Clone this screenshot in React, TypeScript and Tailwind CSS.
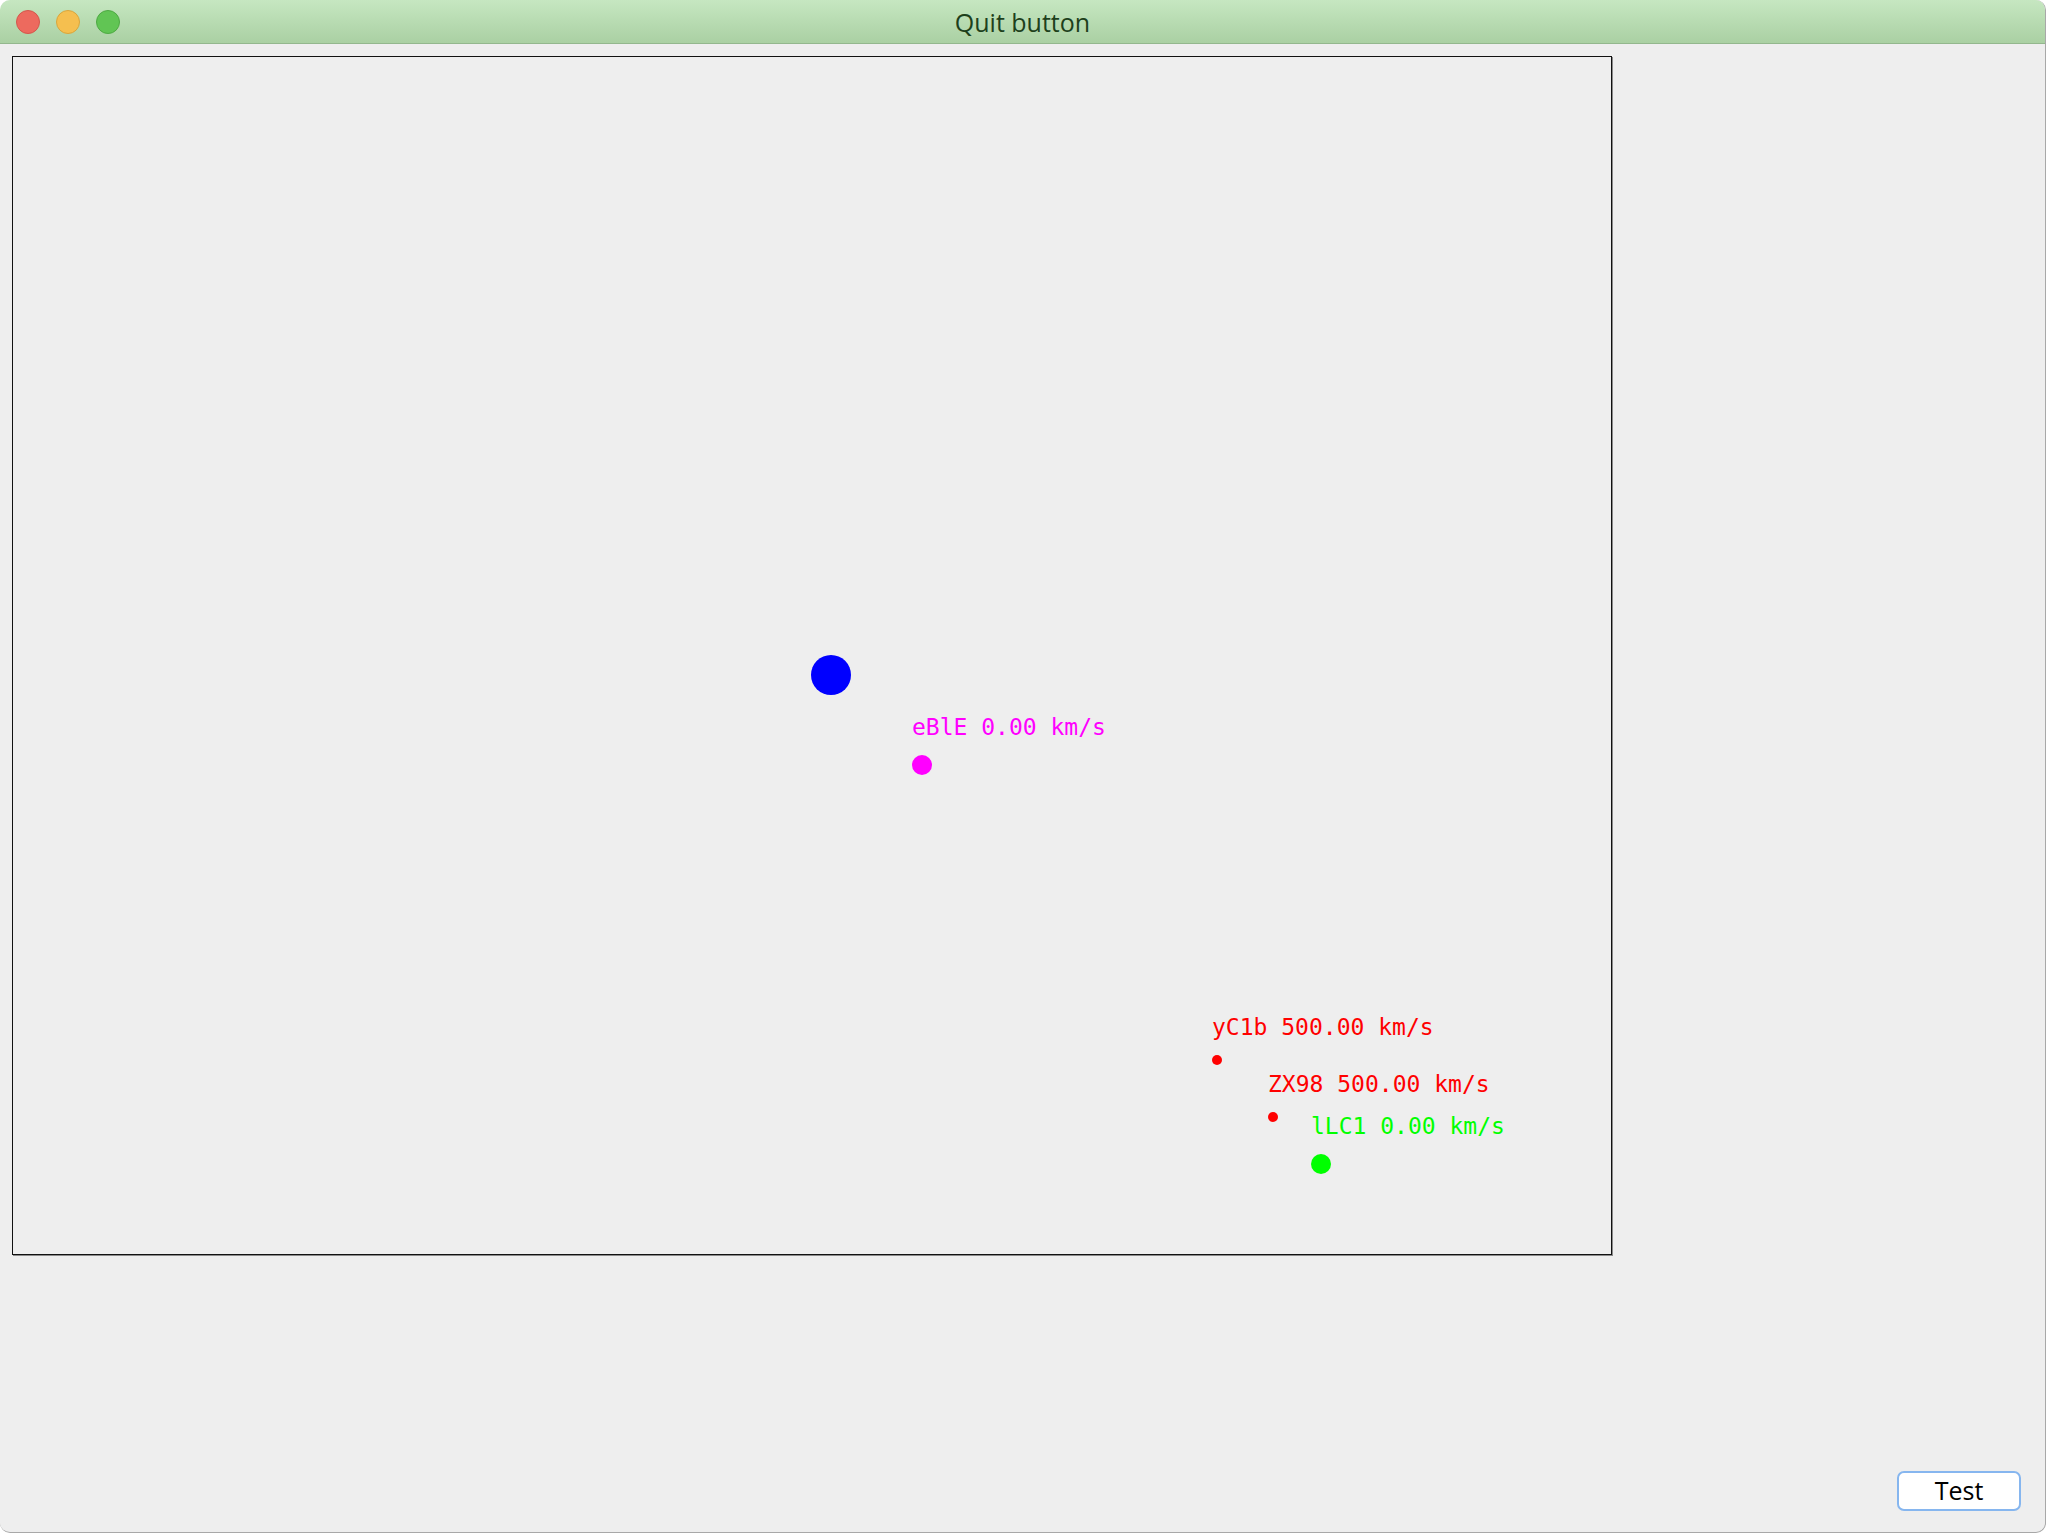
type Body = {
  name: string;
  speed: string;
  color: string;
  x: number;
  y: number;
  size: number;
};

// positions are relative to the canvas' inner top-left corner
const bodies: Body[] = [
  { name: "eBlE", speed: "0.00", color: "#ff00ff", x: 899, y: 698, size: 20 },
  { name: "yC1b", speed: "500.00", color: "#ff0000", x: 1199, y: 998, size: 10 },
  { name: "ZX98", speed: "500.00", color: "#ff0000", x: 1255, y: 1055, size: 10 },
  { name: "lLC1", speed: "0.00", color: "#00ff00", x: 1298, y: 1097, size: 20 },
];

const TrafficLights = () => (
  <div className="flex items-center gap-[16px] pl-[16px]">
    <span className="block w-[24px] h-[24px] rounded-full bg-[#ed6a5e] border border-[#d4574c]" />
    <span className="block w-[24px] h-[24px] rounded-full bg-[#f5bf4f] border border-[#d9a53c]" />
    <span className="block w-[24px] h-[24px] rounded-full bg-[#61c554] border border-[#4ea943]" />
  </div>
);

export default function App() {
  return (
    <div className="w-[2048px] h-[1536px] bg-[#ffffff] overflow-hidden relative">
      <div className="w-[2046px] h-[1533px] flex flex-col bg-[#eeeeee] rounded-[10px] border-r border-b border-[#a8a8a8] overflow-hidden">
        {/* title bar */}
        <div className="relative h-[44px] shrink-0 flex items-center bg-gradient-to-b from-[#c6e7c1] to-[#aad0a3] border-b border-[#93b78d]">
          <TrafficLights />
          <div
            className="absolute inset-0 flex items-center justify-center pt-[2px] text-[25px] text-[#1d401b]"
            style={{ fontFamily: '"Open Sans", "Liberation Sans", sans-serif' }}
          >
            Quit button
          </div>
        </div>

        {/* drawing canvas */}
        <div className="mt-[12px] ml-[12px] w-[1600px] h-[1199px] border border-[#111111] shadow-[1px_1px_0_#8a8a8a] relative">
          <span className="absolute left-[798px] top-[598px] w-[40px] h-[40px] rounded-full bg-[#0000ff]" />
          {bodies.map((b) => (
            <div key={b.name}>
              <span
                className="absolute whitespace-pre text-[23px] leading-none"
                style={{
                  left: b.x,
                  top: b.y - 39,
                  color: b.color,
                  fontFamily: '"DejaVu Sans Mono", monospace',
                }}
              >
                {b.name} {b.speed} km/s
              </span>
              <span
                className="absolute rounded-full"
                style={{ left: b.x, top: b.y, width: b.size, height: b.size, background: b.color }}
              />
            </div>
          ))}
        </div>

        <div className="flex-1" />

        {/* bottom button row */}
        <div className="flex justify-end pr-[24px] pb-[21px]">
          <button
            className="w-[124px] h-[40px] rounded-[7px] bg-white border-2 border-[#86b6ef] text-[25px] text-black flex items-center justify-center"
            style={{ fontFamily: '"Open Sans", "Liberation Sans", sans-serif' }}
          >
            Test
          </button>
        </div>
      </div>
    </div>
  );
}
